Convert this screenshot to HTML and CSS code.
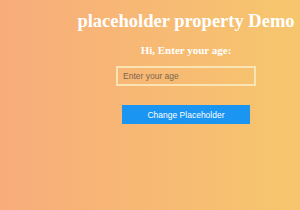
FILE: index.html
```html
<!DOCTYPE html>
<html lang="en">
<head>
    <meta charset="UTF-8">
    <title>placeholder property Demo</title>
    <link rel="stylesheet" href="styles.css">
</head>
<body>
    <div class="container">
        <h1 class="title">placeholder property Demo</h1>
        <p class="label">Hi, Enter your age:</p>
        <input type="text" class="age-input" id="age" placeholder="Enter your age" />
        <button class="change-btn" id="change">Change Placeholder</button>
    </div>

    <script>
        const input = document.getElementById('age');
        document.getElementById('change').addEventListener('click', () => {
            input.placeholder = 'Your age in years';
        });
    </script>
</body>
</html>
```

FILE: styles.css
```css
body {
    margin: 0;
    height: 210px;
    background: linear-gradient(to right, #f8ac7b, #f6c66d);
    font-family: "Liberation Serif", serif;
    color: #ffffff;
}

.container {
    display: flex;
    flex-direction: column;
    align-items: center;
    margin-left: 72px;
    padding-top: 11px;
}

.title {
    margin: 0;
    font-size: 18.5px;
    line-height: 20px;
    white-space: nowrap;
}

.label {
    margin: 13px 0 0;
    font-size: 11px;
    font-weight: bold;
}

.age-input {
    margin-top: 10px;
    width: 140px;
    height: 20px;
    box-sizing: border-box;
    padding: 0 5px;
    border: 2px solid #fbe4b4;
    background: transparent;
    font-family: "Liberation Sans", Arial, sans-serif;
    font-size: 8.5px;
    color: #6b5a45;
}

.age-input::placeholder {
    color: #7a6650;
}

.change-btn {
    margin-top: 19px;
    width: 128px;
    height: 19px;
    border: none;
    background-color: #1a95f2;
    color: #ffffff;
    font-family: "Liberation Sans", Arial, sans-serif;
    font-size: 8.5px;
    cursor: pointer;
}
```
